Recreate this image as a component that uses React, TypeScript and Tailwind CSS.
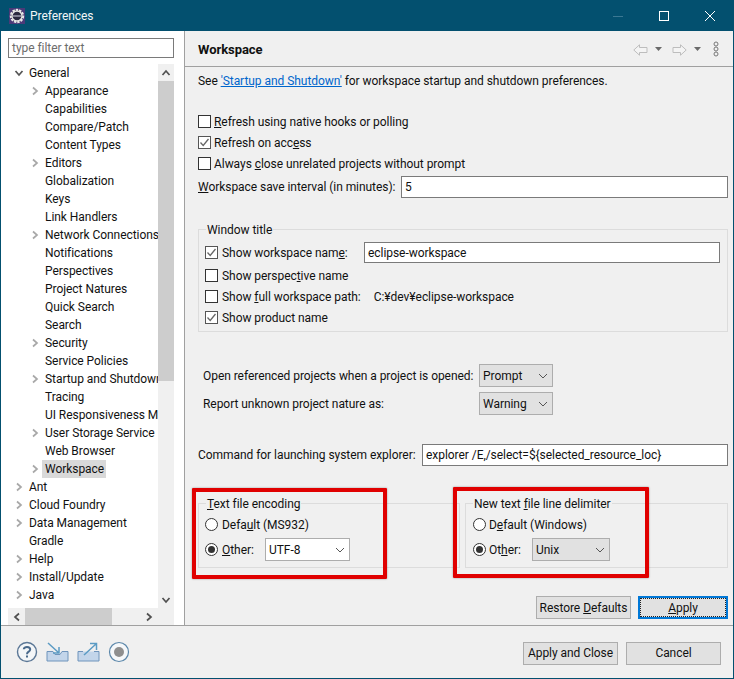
import React from "react";

const Chev = ({ dir, cls }: { dir: "r" | "d" | "l" | "u"; cls: string }) => {
  const d = { r: "M3 1.5 L7 5 L3 8.5", l: "M7 1.5 L3 5 L7 8.5", d: "M1.5 3 L5 7 L8.5 3", u: "M1.5 7 L5 3 L8.5 7" }[dir];
  return (
    <svg width="10" height="10" viewBox="0 0 10 10" className={cls}>
      <path d={d} fill="none" stroke="currentColor" strokeWidth="1.7" />
    </svg>
  );
};

const tree: [string, number, boolean][] = [
  ["General", 0, true],
  ["Appearance", 1, true],
  ["Capabilities", 1, false],
  ["Compare/Patch", 1, false],
  ["Content Types", 1, false],
  ["Editors", 1, true],
  ["Globalization", 1, false],
  ["Keys", 1, false],
  ["Link Handlers", 1, false],
  ["Network Connections", 1, true],
  ["Notifications", 1, false],
  ["Perspectives", 1, false],
  ["Project Natures", 1, false],
  ["Quick Search", 1, false],
  ["Search", 1, false],
  ["Security", 1, true],
  ["Service Policies", 1, false],
  ["Startup and Shutdown", 1, true],
  ["Tracing", 1, false],
  ["UI Responsiveness Monitoring", 1, false],
  ["User Storage Service", 1, true],
  ["Web Browser", 1, false],
  ["Workspace", 1, true],
  ["Ant", 0, true],
  ["Cloud Foundry", 0, true],
  ["Data Management", 0, true],
  ["Gradle", 0, false],
  ["Help", 0, true],
  ["Install/Update", 0, true],
  ["Java", 0, true],
];

const Check = ({ checked, wide, children }: { checked?: boolean; wide?: boolean; children: React.ReactNode }) => (
  <div className="flex items-center h-[21px]">
    <span className={`w-[13px] h-[13px] border bg-white flex items-center justify-center shrink-0 ${checked ? "border-[#555555]" : "border-[#333333]"}`}>
      {checked && (
        <svg width="11" height="11" viewBox="0 0 11 11">
          <path d="M1.5 5.5 L4.2 8.5 L9.5 2" fill="none" stroke="#666666" strokeWidth="1.3" />
        </svg>
      )}
    </span>
    <span className={`whitespace-nowrap ${wide ? "ml-[4px]" : "ml-[3px]"}`}>{children}</span>
  </div>
);

const Radio = ({ checked }: { checked?: boolean }) => (
  <span className="w-[13px] h-[13px] rounded-full border border-[#333333] bg-white flex items-center justify-center shrink-0">
    {checked && <span className="w-[7px] h-[7px] rounded-full bg-[#333333]" />}
  </span>
);

const Select = ({ value, cls }: { value: string; cls: string }) => (
  <div className={`h-[23px] border border-[#adadad] flex items-center justify-between pl-[3px] pr-[4px] ${cls}`}>
    <span>{value}</span>
    <svg width="10" height="6" viewBox="0 0 10 6">
      <path d="M1 1 L5 5 L9 1" fill="none" stroke="#555555" strokeWidth="1" />
    </svg>
  </div>
);

const Input = ({ value, cls }: { value: string; cls: string }) => (
  <div className={`border border-[#7a7a7a] bg-white flex items-center pl-[3px] ${cls}`}>{value}</div>
);

const Btn = ({ children, cls }: { children: React.ReactNode; cls: string }) => (
  <div className={`h-[23px] bg-[#e1e1e1] border border-[#adadad] flex items-center justify-center ${cls}`}>{children}</div>
);

const Legend = ({ children }: { children: React.ReactNode }) => (
  <span className="absolute left-[7px] -top-[9px] h-[18px] px-[1px] bg-[#f0f0f0] whitespace-nowrap">{children}</span>
);

export default function App() {
  return (
    <div
      className="relative w-[734px] h-[679px] overflow-hidden flex flex-col bg-[#f0f0f0] border-x border-b border-[#03506f] text-[12px] leading-[18px] tracking-[-0.05px] text-[#111111]"
      style={{ fontFamily: "Roboto, sans-serif" }}
    >
      {/* Title bar */}
      <div className="h-[31px] shrink-0 bg-[#03506f] flex items-center text-[#f2f6f8] -mx-px">
        <svg width="18" height="18" viewBox="0 0 18 18" className="ml-[8px]">
          <rect x="1" y="1" width="16" height="16" fill="#4a3a78" />
          <circle cx="9" cy="9" r="6.2" fill="#2a2a40" stroke="#e8e8e8" strokeWidth="2" strokeDasharray="2.4 1" />
          <circle cx="9" cy="9" r="5" fill="none" stroke="#e8e8e8" strokeWidth="1.3" />
          <path d="M5 9 H13" stroke="#bbbbcc" strokeWidth="1.2" />
        </svg>
        <span className="ml-[4px]">Preferences</span>
        <div className="ml-auto flex items-center">
          <svg width="12" height="12" viewBox="0 0 12 12" className="mr-[34px]">
            <path d="M1 6.5 H11" stroke="#3b7893" strokeWidth="1" />
          </svg>
          <svg width="12" height="12" viewBox="0 0 12 12" className="mr-[34px]">
            <rect x="1.5" y="1.5" width="9" height="9" fill="none" stroke="#ffffff" strokeWidth="1" />
          </svg>
          <svg width="12" height="12" viewBox="0 0 12 12" className="mr-[18px]">
            <path d="M1 1 L11 11 M11 1 L1 11" stroke="#ffffff" strokeWidth="1" />
          </svg>
        </div>
      </div>

      <div className="flex flex-1 min-h-0">
        {/* Left column */}
        <div className="w-[183px] shrink-0 bg-white border-r border-[#a0a0a0] box-content flex flex-col">
          <div className="pl-[7px] pt-[7px]">
            <div className="w-[166px] h-[20px] border border-[#7a7a7a] flex items-center pl-[3px] text-[#6d6d6d]">type filter text</div>
            <div className="mt-[6px] w-[166px] h-[561px] flex flex-col">
              <div className="flex h-[544px]">
                <div className="w-[150px] overflow-hidden">
                  {tree.map(([name, level, arrow]) => {
                    const selected = name === "Workspace";
                    return (
                      <div key={name} className={`flex items-center h-[18px] whitespace-nowrap ${level ? "pl-[22px]" : "pl-[6px]"}`}>
                        <span className="w-[15px] shrink-0 flex items-center">
                          {arrow && (name === "General" ? <Chev dir="d" cls="text-[#555555]" /> : <Chev dir="r" cls="text-[#a8a8a8]" />)}
                        </span>
                        <span className={selected ? "bg-[#d9d9d9] pl-[3px] pr-[2px] -ml-[3px]" : ""}>{name}</span>
                      </div>
                    );
                  })}
                </div>
                <div className="w-[16px] bg-[#f0f0f0] flex flex-col">
                  <div className="h-[17px] flex items-center justify-center">
                    <Chev dir="u" cls="text-[#505050]" />
                  </div>
                  <div className="h-[300px] bg-[#cdcdcd]" />
                  <div className="flex-1" />
                  <div className="h-[17px] flex items-center justify-center">
                    <Chev dir="d" cls="text-[#505050]" />
                  </div>
                </div>
              </div>
              <div className="flex-1 bg-[#f0f0f0] flex items-center w-[166px]">
                <div className="w-[17px] flex justify-center"><Chev dir="l" cls="text-[#505050]" /></div>
                <div className="w-[87px] h-full bg-[#cdcdcd]" />
                <div className="w-[46px] flex justify-end pr-[4px]"><Chev dir="r" cls="text-[#505050]" /></div>
              </div>
            </div>
          </div>
        </div>

        {/* Main panel */}
        <div className="flex-1 min-w-0 flex flex-col">
          <div className="h-[36px] shrink-0 border-b border-[#a0a0a0] flex items-center pt-[2px] pl-[13px] pr-[14px]">
            <span className="font-bold text-[13px]">Workspace</span>
            <div className="ml-auto flex items-center">
              <svg width="15" height="12" viewBox="0 0 15 12">
                <path d="M0.8 6 L6.5 0.8 V3.5 H14 V8.5 H6.5 V11.2 Z" fill="#f4f4f4" stroke="#bdbdbd" />
              </svg>
              <svg width="8" height="5" viewBox="0 0 8 5" className="ml-[7px]"><path d="M0 0 H7 L3.5 4 Z" fill="#6a6a6a" /></svg>
              <svg width="15" height="12" viewBox="0 0 15 12" className="ml-[9px]">
                <path d="M14.2 6 L8.5 0.8 V3.5 H1 V8.5 H8.5 V11.2 Z" fill="#f4f4f4" stroke="#bdbdbd" />
              </svg>
              <svg width="8" height="5" viewBox="0 0 8 5" className="ml-[7px]"><path d="M0 0 H7 L3.5 4 Z" fill="#6a6a6a" /></svg>
              <svg width="6" height="16" viewBox="0 0 6 16" className="ml-[11px] -mt-[1px]">
                <circle cx="3" cy="3" r="2" fill="none" stroke="#777777" />
                <circle cx="3" cy="8" r="2" fill="none" stroke="#777777" />
                <circle cx="3" cy="13" r="2" fill="none" stroke="#777777" />
              </svg>
            </div>
          </div>

          <div className="flex-1 min-h-0 pl-[13px] pr-[5px] flex flex-col">
            <div className="mt-[5px] h-[18px] whitespace-nowrap">
              See <span className="text-[#0066cc] underline">'Startup and Shutdown'</span> for workspace startup and shutdown preferences.
            </div>
            <div className="mt-[21px]">
              <Check><u>R</u>efresh using native hooks or polling</Check>
              <Check checked>Refresh on acc<u>e</u>ss</Check>
              <Check>Always <u>c</u>lose unrelated projects without prompt</Check>
            </div>
            <div className="mt-[2px] h-[22px] flex items-center">
              <span className="w-[203px] whitespace-nowrap"><u>W</u>orkspace save interval (in minutes):</span>
              <Input value="5" cls="h-[22px] flex-1" />
            </div>

            <div className="relative mt-[31px] h-[103px] border border-[#dcdcdc] pl-[6px] pr-[7px] pt-[12px]">
              <Legend>Window title</Legend>
              <div className="flex items-center">
                <Check checked wide>Show workspace nam<u>e</u>:</Check>
                <Input value="eclipse-workspace" cls="h-[21px] w-[356px] ml-auto" />
              </div>
              <div className="mt-[2px]"><Check wide>Show perspec<u>t</u>ive name</Check></div>
              <div className="flex items-center">
                <Check wide>Show <u>f</u>ull workspace path:</Check>
                <span className="ml-[13px] whitespace-nowrap">C:¥dev¥eclipse-workspace</span>
              </div>
              <Check checked wide>Show product name</Check>
            </div>

            <div className="mt-[32px] pl-[5px] flex items-center">
              <span className="w-[276px] whitespace-nowrap">Open referenced projects when a project is opened:</span>
              <Select value="Prompt" cls="w-[74px] bg-[#e1e1e1]" />
            </div>
            <div className="mt-[5px] pl-[5px] flex items-center">
              <span className="w-[276px] whitespace-nowrap">Report unknown project nature as:</span>
              <Select value="Warning" cls="w-[74px] bg-[#e1e1e1]" />
            </div>

            <div className="mt-[29px] flex items-center">
              <span className="w-[224px] whitespace-nowrap">Command for launching system explorer:</span>
              <Input value="explorer /E,/select=${selected_resource_loc}" cls="h-[22px] flex-1" />
            </div>

            <div className="mt-[37px] h-[65px] flex gap-[5px]">
              <div className="relative w-[262px] border border-[#dcdcdc] pl-[6px] pt-[10px]">
                <Legend><u>T</u>ext file encoding</Legend>
                <div className="flex items-center h-[21px]">
                  <Radio />
                  <span className="ml-[4px] whitespace-nowrap">Defa<u>u</u>lt (MS932)</span>
                </div>
                <div className="mt-[3px] flex items-center h-[23px]">
                  <Radio checked />
                  <span className="ml-[4px] w-[43px]"><u>O</u>ther:</span>
                  <Select value="UTF-8" cls="w-[85px] bg-white" />
                </div>
              </div>
              <div className="relative flex-1 border border-[#dcdcdc] pl-[7px] pt-[10px]">
                <Legend>New text <u>f</u>ile line delimiter</Legend>
                <div className="flex items-center h-[21px]">
                  <Radio />
                  <span className="ml-[3px] whitespace-nowrap">D<u>e</u>fault (Windows)</span>
                </div>
                <div className="mt-[3px] flex items-center h-[23px]">
                  <Radio checked />
                  <span className="ml-[3px] w-[43px]">Ot<u>h</u>er:</span>
                  <Select value="Unix" cls="w-[78px] bg-[#e1e1e1]" />
                </div>
              </div>
            </div>

            <div className="mt-[28px] flex justify-end gap-[7px]">
              <Btn cls="w-[95px]">Restore <u className="ml-[3px]">D</u>efaults</Btn>
              <div className="w-[90px] h-[23px] border-2 border-[#0078d7] bg-[#e1e1e1] flex items-center justify-center">
                <span className="w-full h-full border border-dotted border-[#222222] flex items-center justify-center"><span><u>A</u>pply</span></span>
              </div>
            </div>
          </div>
        </div>
      </div>

      {/* Bottom bar */}
      <div className="h-[53px] shrink-0 border-t border-[#a0a0a0] flex items-center pl-[15px] pr-[12px]">
        <svg width="22" height="22" viewBox="0 0 22 22">
          <circle cx="11" cy="11" r="9.5" fill="#f4f6f8" stroke="#5b7796" strokeWidth="1.4" />
          <path d="M7.8 8.3 C7.8 5.2 14.2 5.2 14.2 8.5 C14.2 10.8 11 10.6 11 13.2" fill="none" stroke="#4a6a8c" strokeWidth="2" />
          <rect x="10" y="14.5" width="2" height="2" fill="#4a6a8c" />
        </svg>
        <svg width="23" height="20" viewBox="0 0 23 20" className="ml-[8px]">
          <path d="M1 9.5 H7 L9 12.5 H14 L16 9.5 H22 V19 H1 Z" fill="#c3d5ea" stroke="#6f94bc" />
          <path d="M2 1 L13 11 M13 5 V11 H7" fill="none" stroke="#5b9bc4" strokeWidth="1.5" />
        </svg>
        <svg width="23" height="20" viewBox="0 0 23 20" className="ml-[8px]">
          <path d="M1 9.5 H6 M17 9.5 H22 V19 H1 V9.5" fill="#c3d5ea" stroke="#6f94bc" />
          <path d="M7 13 L19 2 M13 1.5 H19.5 V8" fill="none" stroke="#5b9bc4" strokeWidth="1.5" />
        </svg>
        <svg width="22" height="22" viewBox="0 0 22 22" className="ml-[8px]">
          <circle cx="11" cy="11" r="9.5" fill="#f6f8fa" stroke="#5b87aa" strokeWidth="1.2" />
          <circle cx="11" cy="11" r="5" fill="#8f8f8f" />
        </svg>
        <div className="ml-auto mt-[2px] flex gap-[8px]">
          <Btn cls="w-[95px]">Apply and Close</Btn>
          <Btn cls="w-[95px]">Cancel</Btn>
        </div>
      </div>

      {/* Annotation rectangles drawn over the screenshot */}
      <div className="absolute left-[191px] top-[488px] w-[195px] h-[91px] border-[4px] border-[#e00000] rounded-[1px] shadow-[0_0_2px_rgba(0,0,0,0.4)]" />
      <div className="absolute left-[452px] top-[487px] w-[196px] h-[91px] border-[4px] border-[#e00000] rounded-[1px] shadow-[0_0_2px_rgba(0,0,0,0.4)]" />
    </div>
  );
}
